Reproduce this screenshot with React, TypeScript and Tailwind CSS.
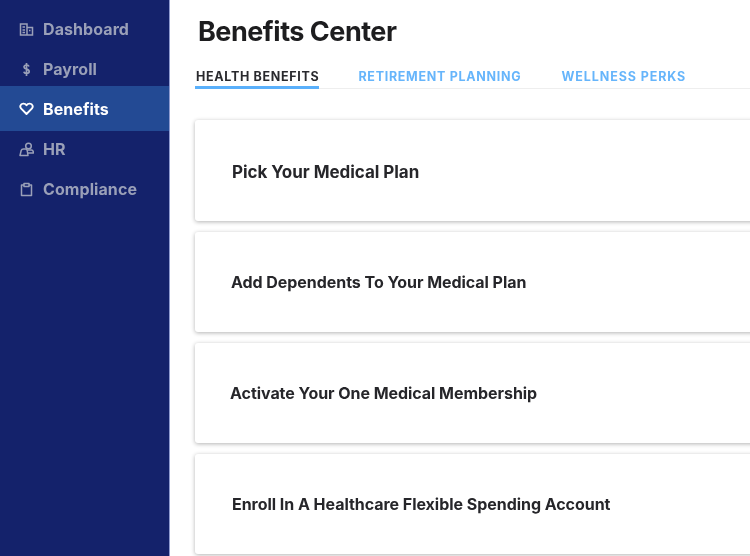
import React from "react";

const BuildingIcon = () => (
  <svg width="15" height="15" viewBox="0 0 15 15" fill="none" stroke="currentColor" strokeWidth="1.5">
    <path d="M1.500 13V2h6.500v11zM8 5.500h5.500V13H8M1 13h13" />
    <path d="M3.500 5h2.500M3.500 8h2.500M3.500 10.500h2.500M10 8.500h1.500" />
  </svg>
);

const DollarIcon = () => (
  <svg width="15" height="15" viewBox="0 0 15 15" fill="none" stroke="currentColor" strokeWidth="1.7">
    <path d="M10 4.500C9.700 3.500 8.700 3 7.500 3 6 3 5 3.800 5 5c0 2.800 5.200 1.500 5.200 4.500 0 1.200-1 1.900-2.700 1.900-1.400 0-2.400-.6-2.700-1.700M7.500 1v13" />
  </svg>
);

const HeartIcon = () => (
  <svg width="15" height="15" viewBox="0 0 15 15" fill="none" stroke="currentColor" strokeWidth="1.9" strokeLinejoin="round">
    <path d="M7.500 13 2 7.300C.6 5.800 1.300 2.800 4.200 2.600c1.500-.1 2.600.6 3.300 1.700.7-1.100 1.800-1.800 3.300-1.700 2.900.2 3.600 3.200 2.200 4.700z" />
  </svg>
);

const PeopleIcon = () => (
  <svg width="15" height="15" viewBox="0 0 15 15" fill="none" stroke="currentColor" strokeWidth="1.5" strokeLinejoin="round">
    <circle cx="9.500" cy="4" r="2.800" />
    <path d="M1 13.500 2.200 8.500C2.500 7.500 3.500 7 4.500 7h2c1 0 1.500.7 1.700 1.500L9 13.500zM8 8h4.500c1 0 1.500.6 1.700 1.500l.3 1.500H8.500" />
  </svg>
);

const ClipboardIcon = () => (
  <svg width="15" height="15" viewBox="0 0 15 15" fill="none" stroke="currentColor" strokeWidth="1.5" strokeLinejoin="round">
    <path d="M5 3H2.500v10.500h10V3H10" />
    <rect x="5" y="1.500" width="5" height="3" />
  </svg>
);

const navItems = [
  { label: "Dashboard", icon: <BuildingIcon /> },
  { label: "Payroll", icon: <DollarIcon /> },
  { label: "Benefits", icon: <HeartIcon />, active: true },
  { label: "HR", icon: <PeopleIcon /> },
  { label: "Compliance", icon: <ClipboardIcon /> },
];

const cards = [
  { label: "Pick Your Medical Plan", box: "h-[101px] pl-[37px] pt-[4px] text-[17px] tracking-[-0.04px]" },
  { label: "Add Dependents To Your Medical Plan", box: "h-[100px] pl-[36px] text-[16px] tracking-[-0.05px]" },
  { label: "Activate Your One Medical Membership", box: "h-[100px] pl-[35px] text-[16px] tracking-[-0.05px]" },
  { label: "Enroll In A Healthcare Flexible Spending Account", box: "h-[100px] pl-[37px] text-[16px] tracking-[-0.04px]" },
];

const App = () => {
  return (
    <div className="flex h-[556px] w-[750px] overflow-hidden bg-white font-['Inter',sans-serif] blur-[0.4px]">
      <aside className="w-[170px] shrink-0 border-r border-[#8f9bd0] bg-[#14226b] pt-[9px]">
        {navItems.map((item) => (
          <div
            key={item.label}
            className={
              item.active
                ? "relative -mb-[2px] -mt-[3px] flex h-[45px] items-center gap-[9px] bg-[#234a94] pl-[19px] text-[16px] font-bold tracking-[0.08px] text-white"
                : "flex h-[40px] items-center gap-[9px] pl-[19px] text-[16px] font-bold tracking-[0.08px] text-[#9aa0b8]"
            }
          >
            <span className="flex w-[15px] justify-center">{item.icon}</span>
            {item.label}
          </div>
        ))}
      </aside>
      <main className="min-w-0 flex-1 pl-[25px]">
        <h1 className="pl-[3px] pt-[15px] text-[27px] font-bold leading-[34px] tracking-[-0.5px] text-[#1d1d1f]">
          Benefits Center
        </h1>
        <div className="mt-[13px] flex h-[27px] border-b border-[#eeeeee]">
          <div className="h-[27px] border-b-[3px] border-[#5ab0fb] pl-px pt-[6px] text-[12.5px] font-bold tracking-[0.68px] text-[#2a2a2e]">
            HEALTH BENEFITS
          </div>
          <div className="ml-[39px] h-[27px] pt-[6px] text-[12.5px] font-bold tracking-[0.71px] text-[#66b5fb]">
            RETIREMENT PLANNING
          </div>
          <div className="ml-[40px] h-[27px] pt-[6px] text-[12.5px] font-bold tracking-[0.9px] text-[#66b5fb]">
            WELLNESS PERKS
          </div>
        </div>
        <div className="mt-[31px] flex w-[600px] flex-col gap-[11px]">
          {cards.map((card) => (
            <div
              key={card.label}
              className={`flex items-center rounded-[3px] bg-white font-bold text-[#26262a] shadow-[0_1px_4px_rgba(0,0,0,0.3)] ${card.box}`}
            >
              {card.label}
            </div>
          ))}
        </div>
      </main>
    </div>
  );
};

export default App;
